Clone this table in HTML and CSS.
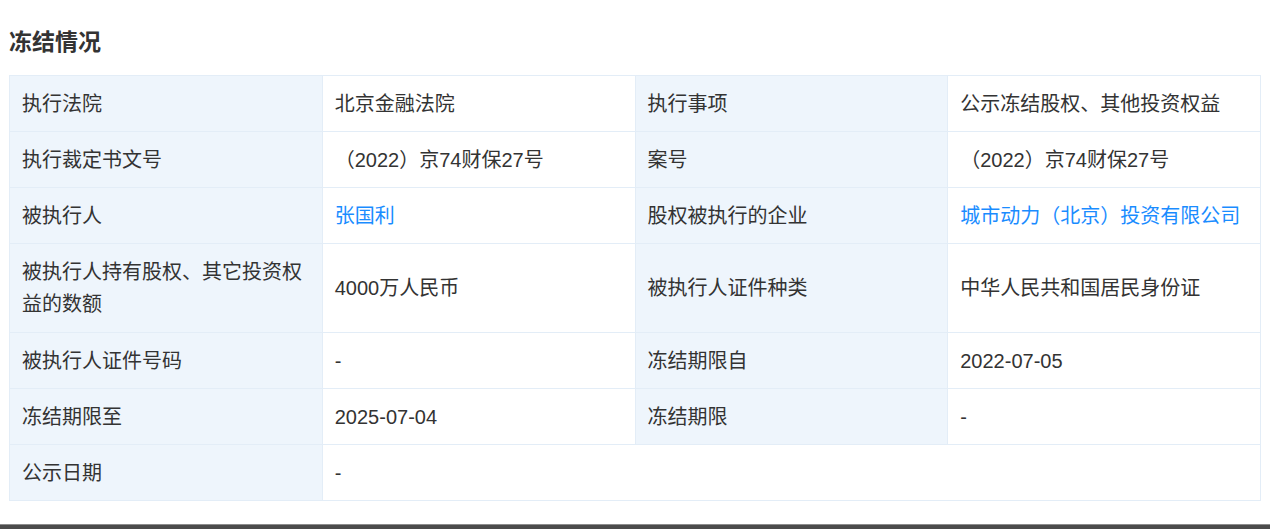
FILE: index.html
```html
<!DOCTYPE html>
<html lang="zh-CN">
<head>
<meta charset="utf-8">
<title>冻结情况</title>
<link rel="stylesheet" href="styles.css">
</head>
<body>
<div class="page">
  <h2 class="section-title">冻结情况</h2>
  <table class="info-table">
    <colgroup>
      <col class="c"><col class="c"><col class="c"><col class="c">
    </colgroup>
    <tbody>
      <tr>
        <th>执行法院</th><td>北京金融法院</td>
        <th>执行事项</th><td>公示冻结股权、其他投资权益</td>
      </tr>
      <tr>
        <th>执行裁定书文号</th><td>（2022）京74财保27号</td>
        <th>案号</th><td>（2022）京74财保27号</td>
      </tr>
      <tr>
        <th>被执行人</th><td><a class="link" href="#">张国利</a></td>
        <th>股权被执行的企业</th><td><a class="link" href="#">城市动力（北京）投资有限公司</a></td>
      </tr>
      <tr class="tall">
        <th>被执行人持有股权、其它投资权益的数额</th><td>4000万人民币</td>
        <th>被执行人证件种类</th><td>中华人民共和国居民身份证</td>
      </tr>
      <tr>
        <th>被执行人证件号码</th><td>-</td>
        <th>冻结期限自</th><td>2022-07-05</td>
      </tr>
      <tr>
        <th>冻结期限至</th><td>2025-07-04</td>
        <th>冻结期限</th><td>-</td>
      </tr>
      <tr>
        <th>公示日期</th><td colspan="3">-</td>
      </tr>
    </tbody>
  </table>
</div>
<div class="bottom-bar"></div>
</body>
</html>
```

FILE: styles.css
```css
html, body {
  margin: 0;
  padding: 0;
  background: #ffffff;
}
body {
  font-family: "Liberation Sans", "Noto Sans CJK SC", sans-serif;
  color: #333333;
  height: 529px;
  overflow: hidden;
}
.page {
  padding: 0 9px;
}
.section-title {
  margin: 0;
  padding-top: 27px;
  font-size: 23px;
  line-height: 30px;
  font-weight: bold;
  color: #333333;
  margin-bottom: 18px;
}
.info-table {
  width: 1252px;
  border-collapse: collapse;
  table-layout: fixed;
  font-size: 20px;
  line-height: 32px;
}
.info-table .c {
  width: 25%;
}
.info-table th,
.info-table td {
  border: 1px solid #e3edf7;
  padding: 12px 12px 11px 12px;
  text-align: left;
  vertical-align: middle;
  font-weight: normal;
  color: #333333;
}
.info-table .tall th,
.info-table .tall td {
  padding-bottom: 12px;
}
.info-table th {
  background: #eef5fc;
}
.info-table td {
  background: #ffffff;
}
.link {
  color: #1a8cff;
  text-decoration: none;
}
.bottom-bar {
  margin-top: 23px;
  height: 5px;
  background: #4b4b4b;
  border-top: 1px solid #8c8c8c;
}
```
